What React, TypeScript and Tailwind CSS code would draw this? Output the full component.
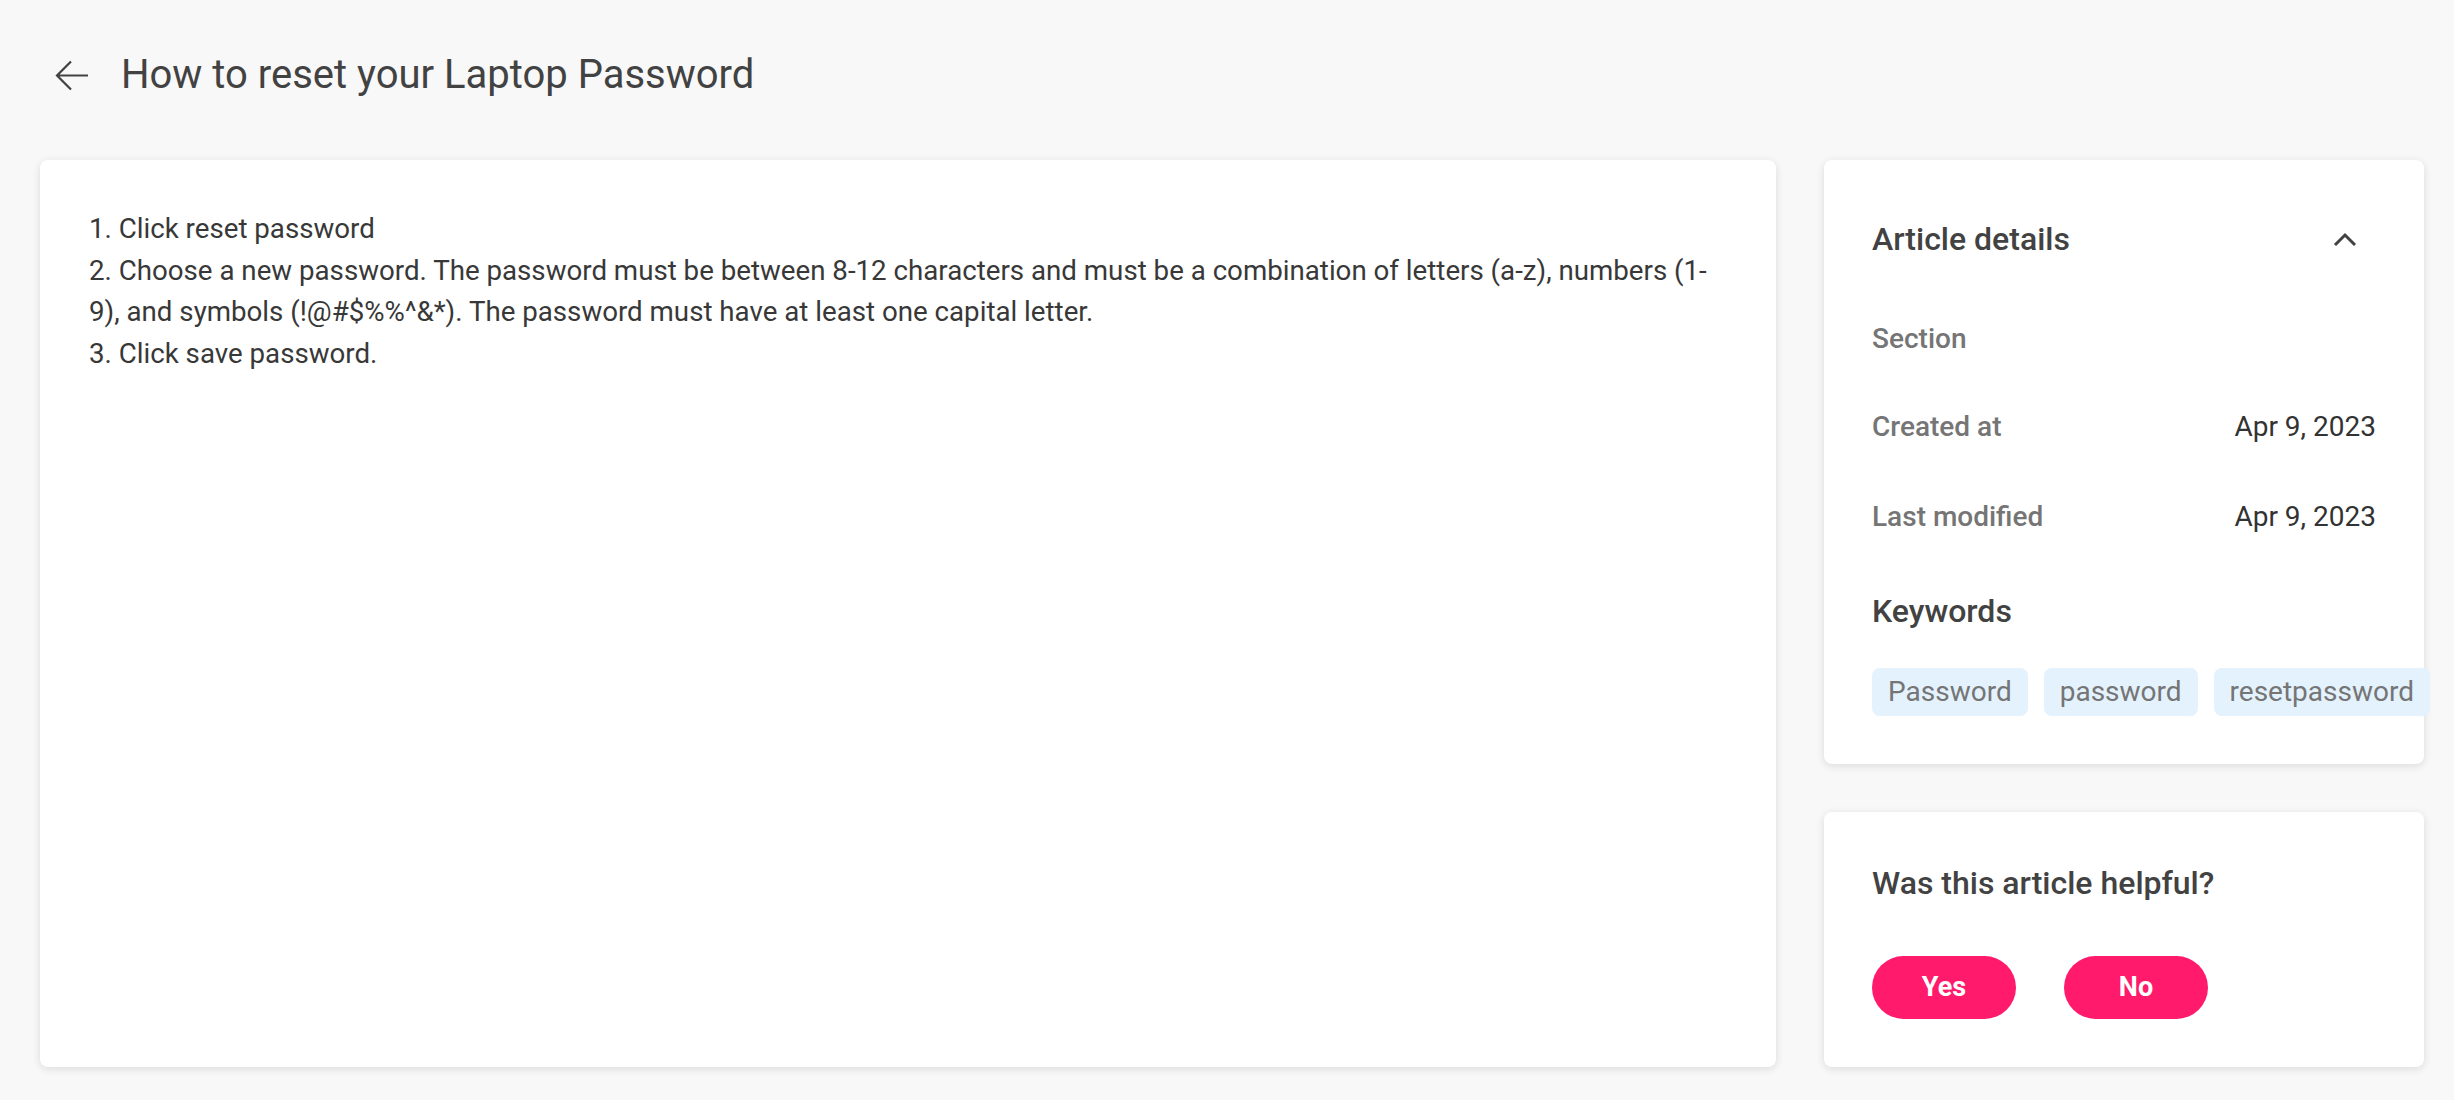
import React from "react";

const keywords = ["Password", "password", "resetpassword"];

const details = [
  { label: "Section", value: "", mt: "mt-[49px]" },
  { label: "Created at", value: "Apr 9, 2023", mt: "mt-[48px]" },
  { label: "Last modified", value: "Apr 9, 2023", mt: "mt-[50px]" },
];

export default function App() {
  return (
    <div
      className="min-h-screen w-full bg-[#f8f8f8] pt-[40px] pl-[40px] pr-[30px] pb-[31px]"
      style={{ fontFamily: "Roboto, 'Noto Sans', sans-serif" }}
    >
      {/* Header */}
      <div className="flex h-[70px] items-center">
        <button className="flex h-[64px] w-[64px] items-center justify-center text-[#424242]">
          <svg width="34" height="31" viewBox="0 0 34 31" fill="none">
            <path d="M33 15.5H2M16 1.5L2 15.5L16 29.5" stroke="currentColor" strokeWidth="2.2" />
          </svg>
        </button>
        <h1 className="ml-[17px] text-[40px] font-normal text-[#424242]">How to reset your Laptop Password</h1>
      </div>

      <div className="mt-[50px] flex gap-[48px]">
        {/* Article body */}
        <div className="flex-1 rounded-[8px] bg-white py-[48px] pl-[49px] pr-[30px] text-[27.7px] leading-[41.5px] text-[#383838] shadow-[0_2px_8px_rgba(0,0,0,0.12)]">
          <p>1. Click reset password</p>
          <p className="whitespace-nowrap">
            2. Choose a new password. The password must be between 8-12 characters and must be a combination of letters (a-z), numbers (1-
            <br />
            9), and symbols (!@#$%%^&amp;*). The password must have at least one capital letter.
          </p>
          <p>3. Click save password.</p>
        </div>

        {/* Side column */}
        <div className="flex w-[600px] shrink-0 flex-col gap-[48px]">
          <div className="rounded-[8px] bg-white p-[48px] shadow-[0_2px_8px_rgba(0,0,0,0.12)]">
            <div className="flex h-[62px] items-center justify-between">
              <h2 className="text-[32px] font-medium text-[#424242]">Article details</h2>
              <button className="flex h-[62px] w-[62px] items-center justify-center text-[#424242]">
                <svg width="24" height="15" viewBox="0 0 24 15" fill="none">
                  <path d="M2 13L12 3L22 13" stroke="currentColor" strokeWidth="3" />
                </svg>
              </button>
            </div>
            {details.map((d) => (
              <div key={d.label} className={`${d.mt} flex h-[40px] items-center justify-between text-[28px]`}>
                <span className="font-medium text-[#757575]">{d.label}</span>
                <span className="text-[#333333]">{d.value}</span>
              </div>
            ))}
            <div className="mt-[54px] flex h-[40px] items-center">
              <h3 className="text-[32px] font-medium text-[#424242]">Keywords</h3>
            </div>
            <div className="mt-[37px] flex gap-[16px] whitespace-nowrap">
              {keywords.map((k) => (
                <span
                  key={k}
                  className="flex h-[48px] items-center rounded-[8px] bg-[#e3f2fd] px-[16px] text-[28px] text-[#757575]"
                >
                  {k}
                </span>
              ))}
            </div>
          </div>

          <div className="flex-1 rounded-[8px] bg-white p-[48px] shadow-[0_2px_8px_rgba(0,0,0,0.12)]">
            <div className="flex h-[46px] items-center">
              <h2 className="text-[32px] font-medium text-[#424242]">Was this article helpful?</h2>
            </div>
            <div className="mt-[50px] flex gap-[48px]">
              <button className="h-[63px] w-[144px] rounded-full bg-[#ff1a6b] text-[27px] font-bold text-white">Yes</button>
              <button className="h-[63px] w-[144px] rounded-full bg-[#ff1a6b] text-[27px] font-bold text-white">No</button>
            </div>
          </div>
        </div>
      </div>
    </div>
  );
}
